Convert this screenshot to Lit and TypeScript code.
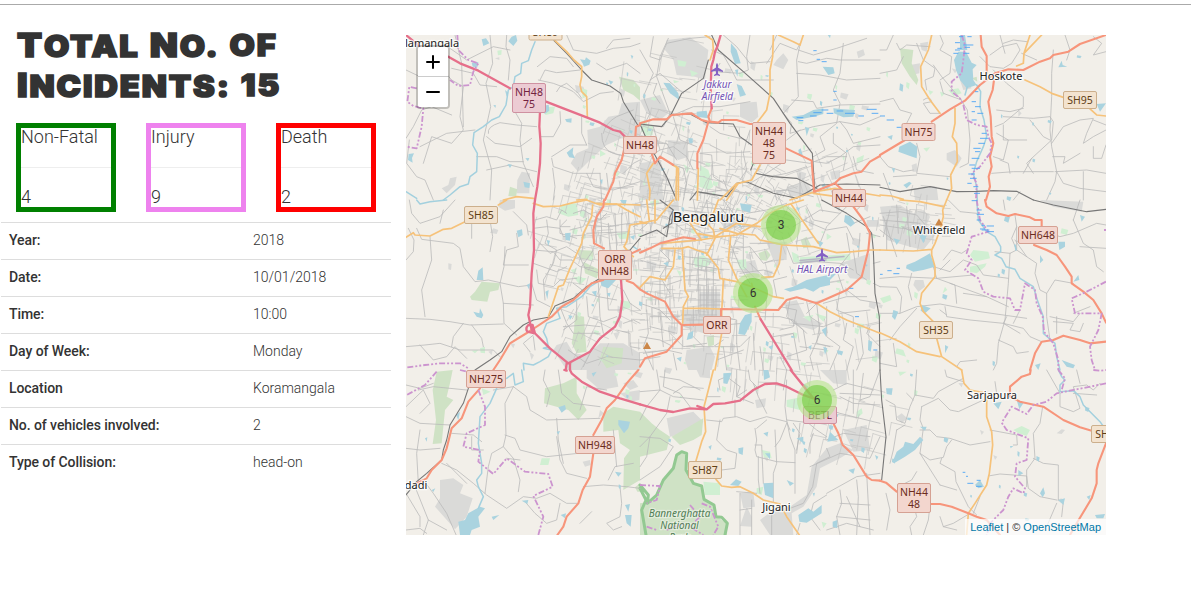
import { LitElement, html, svg, css } from "lit";
import { customElement } from "lit/decorators.js";

/* Map geometry is stored per sector; each sector is 240x170 px, drawn at three units per pixel. */
type Kind =
  | "built" | "wood" | "park" | "water" | "river" | "minor" | "rail"
  | "second" | "trunk" | "motor" | "bound" | "marsh";
type Sector = { x: number; y: number } & Partial<Record<Kind, string>>;

const sectors: Sector[] = [
  {
    x: 400, y: 30,
    built: "M665 220L720 215V330L665 325L620 345L570 390L535 425L512 400L530 370L565 355L562 300L600 290L625 260L655 255ZM150 445L170 440L165 465L140 490L125 475L145 465ZM365 425L390 430L388 490L350 490L352 450ZM285 85L298 82V90ZM525 165L550 170L555 182L530 190Z",
    wood: "M657 140L700 150L720 172V212L700 195L670 180ZM330 470L352 478L348 500L325 498Z",
    park: "M432 232L465 230L460 250L436 255ZM292 62L305 60L304 74L294 76ZM600 360L618 372L600 380ZM545 175L562 180L560 200L548 205ZM640 420L660 430L650 440Z",
    water: "M245 28L258 25L268 40L250 48ZM335 20L348 15L352 32L340 48L325 34ZM540 88L555 90L558 82L572 92L568 104L552 110L548 100ZM500 368L520 352L518 370L525 385L508 382ZM428 228L446 224L448 242L434 252ZM215 98L235 96L232 112L218 110ZM26 372L42 370L36 384L38 398L24 390ZM370 455L390 460L388 474L374 472ZM625 150L640 155L632 164ZM495 268L515 265L514 278L500 276ZM322 402L336 404L330 414ZM600 450L608 448L606 465ZM315 180L325 188L320 200ZM280 225L288 226L286 234ZM376 385L388 384L384 394ZM692 75L700 78L696 88Z",
    river: "M405 35L395 60L385 92L365 100L362 130L345 140L340 170L325 180L318 225L298 260L275 270L250 290L222 308L218 345L232 370L230 425L210 440L205 462L180 470L150 495L130 510M18 485L50 505",
    minor: "M18 120L60 140L120 110L155 150L190 170L180 260L190 300L155 340L95 320L70 400M165 15L185 100L190 290M270 15L278 100L258 160L272 230L250 330L275 420L270 510M18 325L40 290L65 240L95 230L155 255M28 330L20 400L50 440L75 450L100 510M320 15L318 50L330 90L325 150M345 245L365 280L360 330L370 400L400 470M265 310Q260 290 300 278L350 285L410 290M260 320L285 340L360 350L395 325M455 380L510 345L560 345M455 385L460 410L520 430L600 430M458 415L465 470L460 510M500 15L520 60L590 70L640 55L690 50L720 40M412 110L450 80L500 85L520 110M415 150L460 160L500 175L520 185L550 215L600 190L640 185M470 185L480 170L500 160L535 190L545 205M420 150L435 120L470 128L540 120M480 245L482 280L460 320L420 320M545 260L545 310L560 345M590 100L620 120L680 100L720 130M620 55L640 30L690 25M560 430L580 470L640 480L720 455M600 430L605 510M620 430L625 475L700 470M260 420L330 405L410 425M150 55L200 90L280 50L330 60M155 115L220 130L240 165L290 170M225 300L140 310L60 350M230 380L290 380L330 395L370 395M610 310Q615 280 650 260L700 240M605 310Q605 360 640 370L672 378M670 430L700 400L720 390",
    rail: "M462 32L500 70L545 120L575 150L630 168L662 190L670 215L715 288",
    second: "M465 32L500 65L522 90L545 110L545 140L540 165L545 185L560 200L562 260M310 510L350 500L400 505M530 510L560 508",
    trunk: "M720 285L708 290L706 320M672 360L665 390L645 430L640 455L615 510",
    motor: "M18 15L60 50M145 80L180 100L235 122L330 175M438 215L490 235L560 262L600 278L640 300L660 305L680 325M420 245L418 290L422 340L420 400L412 470L405 510",
    bound: "M172 15L175 60L205 90L235 100L220 125L210 165L175 168L150 150M50 175L28 170L22 215L40 228L70 235L65 290L50 355L18 350",
  },
  {
    x: 640, y: 30,
    built: "M80 30L150 22L205 60L195 150L165 140L110 135L100 90L75 60ZM85 330L140 335L145 380L115 390L80 370ZM300 220L350 215L355 260L335 278L300 260ZM410 90L430 70L445 90L430 118L400 105ZM650 65L670 58L675 75L655 85ZM0 210L60 195L85 250L60 270L20 250ZM0 400L60 390L70 510H0ZM570 425L600 420L600 445L575 450ZM440 470L500 455L520 490L450 500Z",
    park: "M180 405L205 420L220 470L205 480L178 470ZM0 275L20 270L22 295L5 305ZM15 290L40 285L38 315L15 318ZM112 90L140 95L135 110L115 108ZM150 120L175 130L155 140ZM100 150L118 155L102 160ZM130 402L150 415L140 430ZM650 385L672 375L668 395L650 400Z",
    water: "M273 40L290 60L302 100L285 102L272 65ZM70 158L90 160L115 190L118 210L90 190ZM290 162L305 168L318 195L300 200ZM170 245L200 242L204 265L170 260ZM548 110L580 112L584 130L565 135ZM455 260L490 255L520 240L550 235L550 252L520 260L470 270ZM580 235L610 238L645 240L640 260L610 262L582 250ZM495 290L508 295L500 318ZM560 10L572 15L570 25ZM475 360L482 355L488 375L478 378ZM285 120L295 118L292 140ZM145 325L158 325L158 340L148 340ZM545 465L555 460L553 485Z",
    minor: "M0 60L40 130L10 200L30 250L20 270M85 25L60 80L50 140L90 250M40 20L30 80L60 90L80 40L150 25L210 20M30 150L60 130L130 190M50 160L40 190L60 220M40 290L60 360L30 380M90 250L70 290L10 285M100 255L160 230L240 230L330 215M250 15L290 50L330 100L390 95M330 15L320 80L325 120L300 130L225 125L240 100M215 60L250 75L270 110L290 150L400 150M380 100L420 40L470 60L480 40M480 45L470 90L475 200L430 250M475 60L520 75L590 55L680 25M470 130L540 135L620 150L720 145M475 95L500 100L560 85L600 90L720 90M455 210L520 215L530 235L600 225L720 222M410 15L390 60M610 40L600 130L580 180L600 220L590 280L540 320L555 360L520 380M430 250L455 280L450 310L520 290L600 275L620 300L640 340L720 320M600 275L660 285L720 260M440 330L480 300M580 310L580 340L620 370L610 420M100 260L120 330L170 350M60 360L100 350L140 380L160 420M0 350L40 340L80 340L110 390M180 370L215 375L220 440L250 460M210 290L240 310L320 330L330 300M210 345L260 370L330 365M320 330L310 370L320 420L300 450M350 430L390 440L440 430L500 410M330 460L380 430L440 390L510 400L560 380L620 380M380 450L400 470L410 510M60 395L80 450L70 510M90 400L130 415L140 460L130 510M60 450L130 450M60 480L165 490M180 490L250 480L330 490M250 450L270 500M525 395L560 400L600 380L640 350L720 345M640 380L650 420L700 430M480 430L480 510M320 490L440 480L520 500",
    rail: "M215 15L235 60L310 125L400 205L450 280L517 370L525 490M205 90L190 145L125 190L90 260L65 290L0 282M90 255L150 252L200 278L280 282L300 320L335 345M340 400L332 420M0 282L25 340L50 385L80 440L110 510M150 510L170 485L260 500L290 460L320 455L400 490L470 505L540 465L620 462L720 465M345 430L400 440L470 445L530 475",
    second: "M195 15L218 30L220 60L210 90M400 15L398 80L390 120L390 190L380 240L350 280M415 15L460 35L480 45L490 15M175 415L172 510M360 405L335 450L295 460L260 510M40 400L20 430L30 480L28 510M98 405L115 415V510M110 410L108 510M240 510L290 460M450 510L525 485L585 475L720 498M520 490L590 500",
    trunk: "M215 235L205 260L210 275L235 278L245 270L290 270L330 282L345 282M0 280L40 268L80 268L95 255L155 250L185 270L205 275L190 330L172 370L172 415M438 355L515 392L522 485L585 460L600 445L640 430L665 425L690 395L720 378M35 370L45 400L60 380L100 405M585 460L605 478",
    motor: "M242 15L232 50L225 65L220 90L214 110L212 180L215 235",
    marsh: "M520 62H530M545 95H560M530 88H540M580 184H590M580 210H590M470 263H490M510 258H530M520 248H545M545 240H565M560 250H580M590 243H610M615 250H645M655 258H672M680 238H710M695 250H715M475 272H490",
  },
  {
    x: 880, y: 30,
    built: "M90 105L120 100L118 130L95 135ZM200 370L225 360L245 385L230 410L200 390ZM215 115L232 120L225 130ZM100 475L170 470L175 510H105ZM240 150L260 150L275 175L250 180ZM120 40L145 35L140 65L125 60ZM95 405L110 400L112 425L98 425ZM415 240L425 250L415 260Z",
    wood: "M60 55L100 60L95 100L115 150L110 165L90 140L65 100ZM275 145L290 140L292 155Z",
    park: "M180 185L195 190L185 200ZM145 180L160 185L150 195ZM205 180L235 175L245 190L220 198ZM130 355L150 352L140 365Z",
    water: "M235 65L258 65L275 98L290 105L278 118L280 150L290 165L260 175L240 150L228 120L222 90ZM240 15L255 15L262 60L240 60ZM545 92L548 105L562 110L535 112ZM58 350L90 335L112 350L110 385L90 378L55 365ZM650 222L678 220L660 245ZM60 160L70 165L68 185L58 180ZM22 320L38 315L35 330ZM70 465L88 455L95 460L80 475ZM35 415L45 415L42 430ZM325 375L330 370L330 385Z",
    river: "M262 170L255 195M290 165L302 185L300 230L312 270L320 320L310 350L290 395L280 430L290 470L292 510",
    minor: "M40 15L20 60L0 60M50 40L60 60L80 45L150 50M110 40L130 90L165 115L160 140L135 150L140 180M180 15L190 40L180 60L215 80L210 130L180 150M160 105L185 140L240 205L262 240L270 330L265 400L240 412M180 155L190 190L245 210M300 80L330 110L370 115L395 100L420 60L410 40L365 50L330 75M425 70L470 90M370 40L400 30L440 35M520 60L515 130L515 200L510 300L515 350L530 425L525 455L500 510M640 20L665 40L640 75L678 65M340 120L380 160L430 200L430 230L370 280L345 290M430 235L390 245L350 240M370 260L460 265L510 260L520 275L515 330L455 385L430 430M370 285L370 330L440 330M350 310L385 330L370 390L340 380M450 270L490 320L510 330M515 340L550 290L600 270L640 265L620 310L610 340L640 320L678 300M518 380L555 380L550 400L600 370M520 425L400 425L335 430M525 425L620 420L678 430M530 425L550 460L600 475L678 485M610 425L610 510M360 15L375 70M555 15L570 60L560 90M640 270L678 285M640 350L640 385L665 385L678 345M0 215L40 205L60 240L95 250L75 290L90 330M110 340L120 380L110 430L210 440M0 130L50 120L70 80M0 380L25 410L70 425L100 420M10 430L40 510M40 440L110 435M390 430L385 400L360 390M455 385L440 400L460 430M130 210Q150 195 155 215L130 220L150 250L180 250M420 485L400 510",
    rail: "M0 472L60 485L150 470L230 485L290 484L340 482L410 484L460 510",
    second: "M155 15L145 60L122 110L125 170L150 210L180 250M410 108L430 100L432 70L450 15M432 70L485 15M435 150L480 170L515 190L550 202M625 232L650 255L678 258M225 235L225 280L217 320L230 340L232 395L212 435L215 475L200 510M0 495L35 498L70 508",
    trunk: "M155 275L210 238L255 212L300 165L345 130L385 118L430 120L480 95L510 85L520 75L565 65L600 42L678 15M302 15L305 50L320 78L320 130M0 375L75 330M342 150L338 180L325 215L332 260L335 320L340 340L330 380L335 410L326 440L330 470L318 510",
    bound: "M245 15L255 45L250 90L245 130L215 155L215 185L240 205L250 225L260 270L290 285L320 290L325 320L335 340L330 370L300 410L275 430L290 460L288 510",
    marsh: "M237 20H250M262 20H275M225 38H240M250 45H280M232 55H245M255 52H270M220 70H235M250 70H268M225 60H240M285 185H295M275 215H288M285 230H302M275 245H285M292 250H310M275 270H290M0 258H15M20 270H42M50 292H65M305 310H320M300 325H325M295 340H315M280 355H302M285 365H300M275 385H298M268 405H285M275 415H300M265 432H285M270 445H290M262 460H275M280 470H295M282 490H300",
  },
  {
    x: 400, y: 200,
    built: "M300 0L345 0L345 25L315 32L295 20ZM280 85L295 90L290 102L270 98ZM145 190L155 192L153 210L145 208ZM470 435L500 425L520 460L560 465L600 430L670 430L720 460V510H500L480 480L460 450ZM330 430L345 432L340 445ZM388 455L402 465L395 480ZM620 440L660 440L660 480L620 480ZM640 400L660 395L650 420ZM265 455L278 450L275 465Z",
    wood: "M225 275L245 245L300 250L295 270L270 275L262 305L215 300L210 290ZM535 150L580 152L580 180L540 178ZM525 345L552 350L555 400L560 455L530 460L515 430L522 390ZM550 185L600 210L590 235L555 220ZM610 440L670 445L665 490L620 505L600 475Z",
    park: "M485 15L530 10L535 45L505 50L475 40ZM512 210L530 205L525 225ZM520 230L560 235L540 255ZM650 100L680 95L690 115L660 118ZM240 445L255 440L255 460L242 458ZM215 452L235 450L225 460ZM660 300L690 305L690 325L665 330ZM550 60L562 50L560 65Z",
    water: "M235 212L248 202L250 240L230 240ZM220 335L238 340L240 325L250 345L245 355L230 350ZM350 92L366 88L368 105L355 112ZM495 100L512 98L510 122L497 120ZM440 120L450 122L445 138ZM436 275L446 270L442 298ZM600 240L650 238L625 265L605 258ZM660 0L680 0L675 20ZM575 275L590 272L588 290ZM620 280L632 278L628 292ZM690 110L705 105L702 120ZM505 345L518 348L510 360ZM380 255L390 250L388 270Z",
    river: "M50 0L60 12L90 5L140 0M595 245L570 260L545 290L500 320L470 325L480 355L440 370L430 395L440 415L445 440L430 445L455 450L445 470L420 485L400 495L370 490L372 510M700 140L715 150",
    minor: "M28 0L35 40L60 70L120 50L165 0M50 85L65 118L120 125L160 130L180 145L190 200L225 245L265 240L355 260L395 255M90 110L95 180L65 270L75 350M120 70L130 30M215 60L215 115M270 60L278 110L270 155M18 180L40 155L42 120L25 85M340 35L380 75L385 105M405 60L440 50L470 60L485 30L500 40M350 100L355 140L320 150L310 195L385 195M315 140L312 200L300 250L310 310L400 315M310 310L312 370L350 405M18 355L90 358L150 365L210 375L310 372M190 370L160 410L155 440M215 375L245 415L250 440M18 440L75 435L120 430L180 450L280 450L300 470M60 435L100 480L140 470L165 440L200 475M400 85L440 80L480 85L490 110L555 105M405 115L450 160L500 140L530 160M400 150L460 155L480 180L515 180M400 190L470 215L500 200M410 210L415 250L460 260L480 240L530 235M395 250L410 300L450 320M440 60L445 100L435 130L470 150L460 190L430 240L435 300M500 60L480 80L510 80M510 90L550 80L560 55M520 40L550 30L600 60L620 40M530 150L555 205L600 220M515 180L540 200L580 205M540 250L545 200L580 150M520 250L560 280L595 290L650 300M560 290L565 350L610 365L650 350M595 250L600 350L610 400M480 320L500 370L520 400L600 400M490 380L555 375L600 380M530 300L530 360L490 390M400 405L370 430L390 455M400 410L405 450M330 430L360 410M620 250L625 330L660 330M670 270L690 310L720 330M670 370L700 360L720 370M650 390L690 400L690 440L720 445M555 75L620 80L690 70M560 100L690 95M585 60L590 130M600 20L605 90L600 130M625 70L630 150M645 40L650 150M665 40L665 130M685 30L690 130M700 80L720 70M480 60L480 100L530 115M505 450L560 490L620 470L720 480M550 500L580 440L620 400",
    rail: "M225 510L270 480L305 455L330 410L370 375L400 360L445 352L465 318L520 295L560 260L600 235M690 150L720 115",
    second: "M18 112L40 98L45 105L90 108L130 88L155 85L195 65M295 15L320 0M400 10L430 20L480 18L520 8L560 0L600 15L650 12L680 30L720 50M578 15L575 50L550 100L545 130L522 180L510 205L490 255L475 260L445 350M680 125L672 140L685 155L700 170M720 70L690 75L680 125M590 10L720 15",
    trunk: "M612 0L610 20L590 50L580 90L582 130L612 145M610 240L575 250L520 300L485 320L455 350L395 390L330 430L300 480L280 510M680 242L700 250L720 268M695 160L720 148",
    motor: "M405 0L400 40L402 150L395 220L390 320L385 345L395 390L450 445L505 490L570 455L600 415L645 380L660 350L667 300L663 238M385 375Q375 385 382 395L405 400L398 375ZM500 490L497 510M510 490V510",
    bound: "M22 502L75 495L120 490L180 490L205 505",
  },
  {
    x: 640, y: 200,
    built: "M180 275L240 275L240 345L180 345ZM120 330L240 330L240 385L190 400L130 380ZM140 450L210 440L225 470L215 510H145L135 480ZM80 20L115 0L120 60L95 75ZM230 50L260 45L300 75L260 95ZM315 185L345 180L360 230L330 240L310 210ZM430 310L470 300L495 350L455 365ZM600 190L690 160L690 240L630 235ZM380 130L440 125L440 180L400 180ZM680 60L715 60L720 80H680ZM20 180L50 190L45 210L20 205ZM450 370L480 350L550 370L520 390Z",
    wood: "M200 410L222 405L222 435L205 440ZM355 160L380 150L392 165L380 182L362 180ZM482 120L500 110L515 140L490 145Z",
    park: "M160 175L190 165L215 185L200 200L165 202ZM480 172L630 162L632 180L480 188ZM455 155L475 165L480 190L460 185ZM30 5L55 0L58 12L35 20ZM110 210L125 215L120 230ZM525 340L560 350L550 365ZM490 350L520 345L510 365ZM20 295L40 290L35 305ZM650 370L672 372L670 385L652 385ZM560 100L575 110L560 120ZM290 180L318 178L320 205L300 208Z",
    water: "M432 268L460 260L500 240L540 230L590 220L570 240L570 255L540 262L520 275L495 265L450 275ZM315 345L335 340L335 365L315 405L295 402L300 370ZM615 45L630 48L645 70L632 80L612 65ZM300 10L335 15L330 38L305 30ZM145 400L160 392L158 415L140 420ZM545 390L560 380L558 410ZM685 420L697 425L692 455L684 450ZM550 440L562 445L555 465ZM110 475L125 470L122 485ZM12 275L25 272L22 285ZM468 20L480 25L475 35ZM590 450L600 455L595 465ZM505 440L515 435L512 450ZM385 440L400 435L395 450ZM530 120L550 128L540 142ZM70 190L85 185L85 200Z",
    minor: "M0 15L60 10L100 0M20 40L80 50L130 90M30 100L35 60L0 90M60 150L90 180L60 230L90 280M0 180L50 195L95 200M0 210L60 215M15 250L80 255L125 240M60 240L60 290M90 230L90 330M0 310L60 330L90 360M20 330L25 400L10 440L40 510M30 350L120 350M30 380L110 400M60 340L70 440M0 410L60 420L100 440M90 400L130 440L200 430M130 170L240 180M140 190L250 210M150 150V260M175 160V340M200 200V330M220 210V330M130 210H230M135 240H240M140 270H240M140 300H240M160 320V380M180 260V345M192 260V345M204 260V345M216 260V345M228 260V345M180 285H240M180 315H240M135 345H230M140 360H190M150 400L190 440M140 440H220L250 420M225 440L300 440L330 410M230 480L310 450M245 350L290 360L290 430M250 375L310 370M340 400L345 510M345 350L420 350L460 360L500 400M375 360L380 300M330 130L410 130M270 130L300 200L330 250M290 145L330 140L370 190L400 180M310 100L310 200L350 240L400 230M300 220L370 210L400 220M330 190L370 230M250 0L280 40L350 60M240 20L280 70L240 90M160 0L170 60L220 70M180 20L270 30M200 0L210 80M130 30L200 40M120 60L190 100L260 90M270 40L300 80L360 80M320 40L380 30L440 10M390 40L450 60M440 20L480 60L470 130M460 80L540 30L600 40M490 60L560 90L620 80L640 120M540 130L560 80L620 20M500 20L520 60L570 70M440 140L460 190L530 185L600 190L640 210M620 100L630 160L590 210L610 270M640 150L650 220L680 240M660 100L655 170M690 50L640 70M410 290L400 240L440 230M420 320L470 330L460 380L420 390M450 300L440 350L490 390L500 450L440 470M500 305L510 350L540 370L530 430L570 440M530 310L500 340M460 370L550 380L600 360M560 320L560 410L600 440L570 510M600 270L590 330L640 350L640 380M620 270L660 300L720 310M600 340L690 330M550 310L620 290L680 290M530 310L540 400L510 470L520 510M400 410L460 400L480 510M420 470L440 510M620 370L610 420L640 440L620 510M660 380L670 460L650 510M690 380L680 400L720 440M480 440L560 450M360 440L370 510M400 400L390 510M250 440L260 510M290 430L300 510M10 460L80 450L125 460M100 460L110 510M0 480L60 470M700 190L720 185M700 250L720 260M680 100L720 110M680 0L650 30",
    rail: "M60 0L100 30L95 70L70 85M0 110L50 90L80 110L90 50L100 30M545 0L620 40L680 80L695 100L700 150L705 280L718 350L720 510",
    second: "M0 70L50 60L100 0M45 68V0M0 65L20 70M20 0L28 60M65 145L125 145L145 140L170 150L200 160L235 205L240 235L290 245L335 260L400 290L430 295M65 130L180 120L240 110L290 105L350 70L390 40L440 15L490 0M170 100L225 110L290 70L360 80M145 60L170 100L185 120M190 60L220 90L225 115L200 165M235 0L220 40L150 65L185 75M240 85L290 100L345 105L360 120L410 130L430 135L520 140L590 158L640 155L690 150L720 150M272 110L265 180L290 235L320 290M425 135L418 190L400 230L365 232M455 15L535 130M105 150L100 200L75 240L30 230L0 262M127 150L135 270L145 290L130 320L128 370M250 240L245 340L245 400L225 510M130 325L190 325L240 327M530 310L570 335L620 360L720 400M335 250L345 290",
    trunk: "M0 158L30 145L60 130L130 112L165 117M0 268L20 280L75 305L100 350L125 375L190 374M125 375L125 405L80 455L15 475L0 500M243 348V327L415 330L440 300L470 292L530 310L620 270L665 230L685 150L690 100L670 60L640 20M345 320L362 358",
    motor: "M362 358L400 420L455 510",
    marsh: "M645 350H657M700 450H712M628 265H640",
  },
  {
    x: 880, y: 200,
    built: "M0 20L60 15L100 40L130 30L150 50L140 75L170 100L130 150L90 140L20 120ZM480 0L610 5L605 35L520 20ZM105 240L130 240L135 260L115 275L100 255ZM10 60L40 60V90L10 95Z",
    park: "M280 150L325 155L330 175L285 185L270 165ZM270 200L320 190L315 200L290 220L270 215ZM50 445L70 450L78 470L45 460ZM195 260L202 270L188 280ZM0 295L30 285L35 300L10 310ZM545 85L565 90L560 105L542 100Z",
    water: "M80 195L105 185L150 160L165 200L130 210L100 215L78 205ZM375 50L390 50L385 68L372 62ZM535 125L555 125L555 140L538 150ZM480 165L490 180L480 190ZM595 225L598 240L580 245ZM125 315L152 325L135 340L122 332ZM40 330L55 335L45 360L36 350ZM195 435L205 440L195 460ZM545 480L585 495L580 505L560 500ZM465 495L482 490L475 510ZM600 45L615 50L605 65ZM40 115L60 120L50 135ZM115 100L140 108L130 130Z",
    river: "M290 0L295 60L320 95L345 110L362 140L362 155L345 165L365 175L378 200L405 208L420 235L460 260L472 300L490 350L490 400L525 430L530 470L540 510M405 135L408 150",
    minor: "M0 40L60 35L110 45L140 80M0 90L40 120M20 60L20 150M50 15L55 100M80 20L90 140M0 60L120 70M0 75L100 90M30 30L10 110M65 80L130 110M190 180L215 150L245 160L260 150M205 0L240 35L290 40M375 30L370 0M405 45L410 80L395 115L410 150L390 160L385 250L375 360L355 430L350 490L340 510M410 80L410 150L440 170L470 190L465 220L480 270L500 280L500 350L510 420M345 155L390 160M405 120L440 170M0 235L60 230L170 235L280 225M170 235L225 255L230 310M170 235L160 200L210 215L250 180L290 195L310 225L385 235M180 210L210 180M95 220L85 260L95 300M0 260L50 262L65 290L60 340L0 340M60 340L110 320L180 312L300 335L440 355M195 320L200 350L270 360L370 370L420 400M250 280L320 290L385 320M110 325L60 380L30 420M210 250L320 290M380 350L370 370L430 385L450 410L485 425M355 420L400 440L410 460L445 455M0 490L50 500L40 430M230 500L240 485L290 480M580 60L610 130L640 150L650 200L670 215M480 90L540 110L580 100L650 70L678 75M600 0L580 60M500 280L525 240L580 250M510 350L580 365L600 340M520 365L580 370L570 390L600 395L610 370M530 350L530 400M580 340L630 320M410 125L430 115M420 330L400 370M600 140L678 145M10 50L50 170M180 330L200 345",
    rail: "M460 0L520 15L620 35L678 28",
    second: "M60 0L120 5L190 20M200 0L188 30L190 50L180 90L165 130L155 150L155 165L165 200L165 230L125 280L120 310L130 335L160 365M0 150L100 153L155 148M170 415L185 470L245 510M0 398L60 425L110 455L180 470",
    trunk: "M315 0L320 20L350 40L385 48L405 42L450 52L465 60L485 60V80M462 135L500 150L530 165L555 200L575 230L575 250L610 275L640 300L665 340L678 368M450 510L465 460L485 425L520 420L550 407L600 420L630 430L678 425",
    bound: "M290 0L300 60L325 95L275 110L260 160L275 180L255 210L295 235L310 275L340 290L390 295L405 330L420 330L435 250L465 270L470 310L488 350L492 395L520 430L535 480L535 510M678 245L620 275L575 295L585 340L665 340L655 390L630 440L635 480L645 510M672 90H678",
    marsh: "M275 2H292M290 30H305M290 43H312M290 60H302M320 78H342M305 90H328M305 76H315M300 87H315M320 95H342M50 205H60M22 212H35M40 221H58M0 223H8",
  },
  {
    x: 400, y: 370,
    built: "M120 330L160 325L190 345L180 370L218 385L200 440L165 478L105 410L120 385ZM560 0L645 0L655 50L630 55L600 60L560 25ZM600 120L612 130L595 145ZM548 275L570 270L572 285L555 290ZM670 40L700 30L715 50L690 60ZM660 70L720 60L718 90L690 95Z",
    wood: "M110 5L158 0L150 40L140 80L160 90L135 120L125 220L98 222L108 150L98 60ZM435 55L490 40L530 20L530 70L560 120L535 150L505 120L470 110L432 100ZM610 130L640 110L720 125V330L670 360L672 265L690 240L660 220L655 180L610 185ZM720 340L705 352L712 365H720Z",
    park: "M425 265L450 265L445 285L420 285ZM245 55L272 65L250 75Z",
    water: "M175 455L195 450L205 430L240 410L255 415L235 440L240 470L215 480L210 495H180ZM655 150L690 155L685 175L672 190L655 165ZM475 112L495 105L498 118L485 128ZM365 392L385 390L382 402ZM645 305L665 308L655 320ZM675 405L690 402L685 425ZM675 435L695 435L692 470L680 460ZM275 440L298 435L280 450ZM482 435L498 430L495 445ZM95 360L106 355L100 366ZM168 135L180 125L175 150ZM75 205L82 202L80 215ZM470 185L480 183L475 194ZM575 10L590 5L580 20Z",
    river: "M320 25L340 10L345 45L370 35L365 0M290 55L270 100L240 140L235 220L245 280L245 310L230 330L235 350L250 380L235 415",
    minor: "M18 140L60 160L150 165M18 45L60 55L100 40M18 110L70 60L90 100L60 130M18 235L60 240L120 235M60 180L50 250L55 340M70 330L100 370L140 430L175 510M18 370L60 440L60 470M45 350L85 450L70 495M85 450L140 480M18 480L60 475L80 490M125 280L170 300L220 340L260 375L320 415L370 380L410 385L450 370L500 400L530 400M140 280L200 340M155 190L220 195L245 215M340 50L315 100L318 195L310 230L275 250L265 290L255 370M340 50L380 80L390 120L440 150L600 145M315 195L345 205L360 240L440 260L535 250M310 230L340 265L360 330L355 365M320 265L360 270M470 145L475 210L490 280M470 200L480 270L500 310L560 325M375 395L405 430L440 460L470 450L480 400M550 350L610 345L680 350L720 355M540 460L575 425M660 350L665 400L660 440L620 460L640 480L665 470M435 0L430 30L450 70L440 110M475 0L485 70L520 100L600 110M540 120L560 50L620 60M215 200L215 240L250 240M640 180L650 290M625 330L645 290L700 280M280 60L340 50M55 60L100 50L200 60",
    rail: "M205 55L190 100L150 165L140 210L130 240L125 270L80 310L50 335L18 375",
    trunk: "M240 55L205 95L185 145L155 175L140 235L125 270L95 300L80 325L50 340M715 0L680 40L645 90L620 115L605 150L580 195M580 250L570 320L548 360L535 400L500 440L490 470L472 495",
    motor: "M510 0L515 10L545 35L600 65L660 85L720 103M493 0L500 2",
    bound: "M110 5L75 45L20 75M235 60L255 110L255 165L200 190L190 230L240 240L235 275L280 312L320 265L375 305L445 312L458 350L400 378L430 440L415 495M180 0L200 5",
  },
  {
    x: 640, y: 370,
    built: "M360 450L400 420L450 410L500 375L515 290L560 235L600 220L640 240L600 265L540 295L530 350L490 410L455 430L460 495H390ZM80 145L160 125L190 155L170 180L90 200ZM300 370L340 365L345 410L310 415ZM610 180L680 165L690 240L640 245ZM345 90L378 85L375 110L350 115ZM170 0L210 0V25L180 22ZM320 410L335 440L335 470L300 468ZM540 0L620 0L620 45L580 40ZM370 260L385 262L382 275Z",
    wood: "M0 125L35 160L60 180L90 200L80 240L0 260ZM95 200L190 145L185 195L160 210L120 225ZM0 400L30 395L50 375L70 330L100 295L110 255L140 245L140 300L160 340L185 350L190 390L225 410L230 440L260 460V495H0Z",
    park: "M190 335L240 340L240 375L195 375ZM365 240L390 245L395 265L372 262ZM650 125L665 115L668 130L652 145ZM440 90L490 80L480 120L440 110ZM350 355L370 350L365 375L350 370ZM545 455L560 460L550 475Z",
    water: "M475 435L505 415L520 425L545 405L545 430L500 458L478 455ZM370 340L400 338L400 385L375 375ZM250 10L275 8L262 42L250 40ZM370 0L385 0L390 22L372 30ZM570 185L595 210L562 215ZM270 345L288 328L305 335L295 348ZM295 235L310 232L308 255L296 250ZM440 330L462 340L450 348ZM578 455L592 450L592 475L578 470ZM470 205L490 200L490 220ZM625 300L645 295L640 312ZM370 190L385 185L382 200ZM518 370L525 368L522 380ZM490 40L505 50L495 65ZM375 250L390 250L390 268ZM205 230L215 225L212 240ZM705 255L715 260L710 270Z",
    minor: "M50 0L60 60L20 110L0 150M75 0L70 50L120 70L150 110M0 65L60 60L100 80L190 90M90 80L80 130L30 200L0 230M60 20L120 30L180 60M0 200L60 205L100 230L60 290L0 330M30 200L20 260L0 290M100 70L130 50L190 55M200 150L245 155L250 145L290 140L330 155L380 140L440 155L450 180M285 90L285 140M240 150L230 210L260 240L290 250L285 295L245 300M240 60L235 30L260 20L300 50M300 50L290 80L320 60M340 40L355 80L380 130M325 0L330 30L350 50M345 175L350 210L345 240L350 260L410 275L465 278M350 175L380 150M345 225L365 225L370 340M355 260L355 330L360 370M405 180L410 280L400 310L400 395M440 160L420 210L405 230M440 150L450 200L465 240L465 370M460 160L480 190L470 240M440 30L435 110L440 150L480 155L520 160M480 160L470 250M540 110L600 130L720 160M500 130L500 155L530 180L560 200M520 190L510 220L510 250M510 290L600 250L690 265L720 200M560 210L610 190L690 200M600 80L640 100L720 105M600 70L720 75M580 60L620 40L700 60M640 0L640 130M670 10L660 90M720 0L690 80L660 90M290 0L290 80L340 100M440 0L430 60M200 80L240 80M290 365L350 370M300 370V495M335 390V495M395 430V495M300 420L335 415M560 370L650 320L720 310M560 375L520 400L510 440L540 480M600 360L605 400L590 440L600 495M650 330L655 380L650 495M680 310L690 495M600 400L690 405M590 440L690 450M620 380L660 470M560 480L620 460L700 480M480 460L470 495M560 235L570 260L530 280L518 350L490 400L450 415",
    second: "M220 0L205 60L192 110L197 185L185 215L168 272M228 328L245 348L275 352L300 350L340 370L370 390L420 402L440 440L478 495",
    trunk: "M580 160L595 190L608 225L640 255L680 320L695 330L720 332",
    motor: "M0 103L60 120L100 126L150 115L200 118L220 102L255 100L300 92L340 60L375 42L410 40L440 50L490 75L520 85M452 0L520 85M172 108L200 118",
    bound: "M0 345L60 348L50 390L20 400M20 470L50 480M150 405L180 440L150 470L190 495M185 400L210 410L235 470L220 495M80 480L130 460",
  },
  {
    x: 880, y: 370,
    built: "M50 140L65 130L82 145L65 160ZM530 190L545 178L555 180L545 192ZM235 40L250 38L245 52ZM340 255L352 260L345 270ZM530 390L545 385V400ZM300 180L312 185L305 195Z",
    park: "M400 180L425 168L450 180L440 198L415 190ZM55 5L80 5L60 18Z",
    water: "M40 270L50 245L70 230L75 215L100 222L120 200L130 210L105 240L75 260L42 280ZM18 55L38 55L35 75L20 72ZM340 100L365 95L355 118ZM410 90L430 100L418 118ZM415 300L430 310L415 318ZM285 345L300 330L312 350L295 355ZM480 370L490 352L495 370L488 382ZM645 435L675 432L670 445L650 445ZM620 380L632 375L628 390ZM120 170L140 170L135 182ZM535 390L555 385L550 405ZM390 228L400 228L392 235Z",
    river: "M535 0L545 20L555 30L540 45L540 65L580 62L600 80L610 105L660 155L678 180",
    minor: "M18 90L45 105L50 150L75 160L90 110L105 75L160 85L175 65L230 35L250 25M110 0L105 75M195 0L200 20L250 35M345 35L350 70M125 110L175 85L210 120L235 125L310 90M125 110L120 150L130 175L120 250L180 345M50 180L75 165M50 180L40 240L30 280M120 180L150 180L170 200L210 205L270 225L330 215M120 250L150 270L190 262L200 230L215 210M185 265L180 280L225 305L228 335L265 410L290 435M180 345L230 360M60 375L75 340L95 330L110 305M325 318L360 312L440 318L445 355L480 380L530 390M460 265L490 280L535 285L535 390M330 180L410 195L412 225L400 225M488 110L480 160L460 190L465 265L440 300L440 350M540 70L540 110L580 125L600 115L580 50L620 45L640 60L660 40M500 0L540 70M580 70L650 75M550 395L545 440M530 400L500 470M600 40L590 0M270 430L220 460L190 470M150 405L145 450L130 495M180 440L190 470L230 480M100 400L110 440L90 470L95 495M18 370L30 420L20 480M280 430L300 380M80 70L100 90",
    rail: "M0 0L5 90L18 200L5 330",
    second: "M245 0L252 40L270 60L310 68L320 80L320 140L335 185L338 225L328 310L320 345L285 400L265 430L260 495",
    trunk: "M0 332L18 338L50 365M152 402L180 402L215 410L265 430L290 440L320 450L360 495M452 0L450 12L425 20L390 50L390 80L420 95L490 110L550 150L600 172L635 182M678 220L655 280L650 300L650 340L635 385L590 460L570 495",
    bound: "M678 40L640 48L530 70L500 95L460 105L440 132L395 110L365 158L380 180L445 205L440 270L410 280L405 320L435 355L430 370L400 355L385 380L370 420L330 460L320 495M535 0L555 25L545 60M640 0L660 2L678 0",
    marsh: "M248 307H256M258 319H264M262 340H280M290 331H302M288 349H305",
  },
];

/* Street blocks filling the denser quarters: centre, size, rotation, spacing, seed. */
const quarters: [number, number, number, number, number, number, number][] = [
  [690, 215, 120, 110, 12, 8, 3], [690, 275, 110, 110, 2, 8, 5], [620, 225, 80, 90, -8, 9, 9],
  [655, 150, 100, 80, 18, 10, 12], [660, 320, 80, 80, -4, 10, 17], [750, 200, 90, 80, 28, 9, 21],
  [780, 245, 60, 60, -14, 11, 25], [915, 215, 70, 60, 8, 9, 33],
  [760, 350, 110, 80, 6, 15, 37], [830, 330, 100, 90, -10, 15, 41], [565, 235, 70, 120, 14, 13, 47],
  [595, 320, 70, 80, 24, 14, 51], [820, 180, 90, 60, -20, 13, 57], [845, 415, 110, 60, 12, 14, 61],
  [670, 80, 90, 80, 10, 17, 67], [720, 145, 90, 60, 0, 13, 71], [605, 170, 80, 70, 16, 13, 75],
];

function seeded(seed: number) {
  let s = seed * 7919 + 13;
  return () => ((s = (s * 16807) % 2147483647) / 2147483647);
}

function streetPath([cx, cy, w, h, deg, step, seed]: (typeof quarters)[number]) {
  const rnd = seeded(seed);
  const c = Math.cos((deg * Math.PI) / 180);
  const s = Math.sin((deg * Math.PI) / 180);
  const pt = (x: number, y: number) =>
    `${(cx + x * c - y * s).toFixed(1)} ${(cy + x * s + y * c).toFixed(1)}`;
  let d = "";
  const inside = (x: number, y: number) => (x / w) ** 2 + (y / h) ** 2 < 0.27;
  for (let x = -w / 2; x < w / 2; x += step) {
    for (let y = -h / 2; y < h / 2; y += step) {
      if (!inside(x, y)) continue;
      const jx = x + (rnd() - 0.5) * step * 0.6;
      const jy = y + (rnd() - 0.5) * step * 0.6;
      if (rnd() < 0.55) d += `M${pt(jx, jy)}L${pt(jx + step * (0.8 + rnd()), jy + (rnd() - 0.5) * 3)}`;
      if (rnd() < 0.55) d += `M${pt(jx, jy)}L${pt(jx + (rnd() - 0.5) * 3, jy + step * (0.8 + rnd()))}`;
    }
  }
  return d;
}

function specks(seed: number, count: number, x0: number, y0: number, w: number, h: number, size: number) {
  const rnd = seeded(seed);
  let d = "";
  for (let i = 0; i < count; i++) {
    const x = x0 + rnd() * w;
    const y = y0 + rnd() * h;
    const a = size * (0.4 + rnd());
    const b = size * (0.4 + rnd());
    d += `M${x.toFixed(1)} ${y.toFixed(1)}l${a.toFixed(1)} ${(b * 0.3).toFixed(1)}l${(-a * 0.3).toFixed(1)} ${b.toFixed(1)}l${(-a * 0.8).toFixed(1)} ${(-b * 0.4).toFixed(1)}z`;
  }
  return d;
}

const streets = quarters.map(streetPath).join("");
const layers: Kind[] = ["rail", "second", "trunk", "motor", "bound", "marsh"];

/* Road shields: centre x, top, width, class, lines. */
const shields: [number, number, number, string, string[]][] = [
  [545.5, 23, 33, "sh", ["SH89"]],
  [529, 83.5, 33, "mw", ["NH48", "75"]],
  [640, 136.5, 33, "nh", ["NH48"]],
  [769, 122.5, 33, "nh", ["NH44", "48", "75"]],
  [918.5, 123.5, 33, "nh", ["NH75"]],
  [1080, 91.5, 33, "sh", ["SH95"]],
  [849, 189.5, 33, "nh", ["NH44"]],
  [481, 206.5, 33, "sh", ["SH85"]],
  [615, 250.5, 33, "nh", ["ORR", "NH48"]],
  [1038, 226.5, 39, "nh", ["NH648"]],
  [717, 316.5, 27, "nh", ["ORR"]],
  [936, 321.5, 33, "sh", ["SH35"]],
  [486, 370.5, 39, "nh", ["NH275"]],
  [820, 406.5, 33, "mw", ["BETL"]],
  [595, 436.5, 39, "nh", ["NH948"]],
  [705, 461.5, 33, "sh", ["SH87"]],
  [1108, 425.5, 33, "sh", ["SH35"]],
  [914, 483.5, 33, "nh", ["NH44", "48"]],
];

const places: [number, number, string, string][] = [
  [432, 46.5, "lamangala", "town"],
  [1001, 79.5, "Hoskote", "town"],
  [708.5, 221.5, "Bengaluru", "city"],
  [939, 234, "Whitefield", "town"],
  [992, 399, "Sarjapura", "town"],
  [416, 489, "dadi", "town"],
  [776.5, 510.5, "Jigani", "town"],
  [717.5, 88, "Jakkur", "air"],
  [717.5, 100, "Airfield", "air"],
  [822, 273, "HAL Airport", "air"],
  [679.5, 517, "Bannerghatta", "forest"],
  [679.5, 529, "National", "forest"],
  [679.5, 541, "Park", "forest"],
];

const clusters: [number, number, number][] = [
  [781, 225, 3],
  [753, 293, 6],
  [817, 400, 6],
];

@customElement("incident-map")
class IncidentMap extends LitElement {
  static styles = css`
    :host { display: block; position: relative; width: 700px; height: 500px; overflow: hidden; background: #f2efe9; }
    .canvas { display: block; width: 700px; height: 500px; }
    path { vector-effect: non-scaling-stroke; stroke-linejoin: round; stroke-linecap: round; }
    .built { fill: #dadad8; }
    .wood { fill: #cfe2c5; }
    .park { fill: #d0efd2; }
    .water { fill: #aad3df; }
    .river { fill: none; stroke: #a3d0de; stroke-width: 1.5; }
    .minor { fill: none; stroke: #bababa; stroke-width: 0.8; }
    .streets { fill: none; stroke: #c5c5c4; stroke-width: 0.7; }
    .rail { fill: none; stroke: #777; stroke-width: 1.1; }
    .second { fill: none; stroke: #f6c27a; stroke-width: 1.7; }
    .trunk { fill: none; stroke: #f7957b; stroke-width: 2.1; }
    .motor { fill: none; stroke: #e66f8a; stroke-width: 2.3; }
    .bound { fill: none; stroke: #cc94cf; stroke-width: 1.8; stroke-linecap: butt; stroke-dasharray: 6 2 2 2 2 2; }
    .marsh { fill: none; stroke: #4da5f5; stroke-width: 0.9; stroke-linecap: butt; }
    .edge { fill: none; stroke: #93c992; stroke-width: 3; }
    .peak { fill: #cc8748; }
    .plane { fill: #8461c4; }
    .runway { fill: none; stroke: #b8b5c4; stroke-width: 1.5; }
    text { font-family: "Noto Sans", sans-serif; text-anchor: middle; }
    .town, .city, .air, .forest { paint-order: stroke; stroke: rgba(255, 255, 255, 0.75); stroke-width: 2.5px; stroke-linejoin: round; }
    .town { font-size: 11px; fill: #222; }
    .city { font-size: 14.6px; fill: #222; }
    .air { font-size: 10px; font-style: italic; fill: #7252b5; }
    .forest { font-size: 10px; font-style: italic; fill: #517d55; stroke: rgba(255, 255, 255, 0.4); }
    .plate { stroke-width: 1; }
    .plate.nh { fill: #f3d6ce; stroke: #d5a193; }
    .plate.mw { fill: #eccbd3; stroke: #cf91a1; }
    .plate.sh { fill: #f3e3cf; stroke: #ccaf8c; }
    .ref { font-size: 10.5px; }
    .ref.nh { fill: #6b2b20; }
    .ref.mw { fill: #73223f; }
    .ref.sh { fill: #604016; }
    .halo { fill: rgba(181, 226, 140, 0.6); }
    .disc { fill: rgba(110, 204, 57, 0.6); }
    .count { font-size: 12px; fill: #333; font-family: "Roboto", sans-serif; }
    .zoom {
      position: absolute; left: 10px; top: 10px; display: flex; flex-direction: column;
      border: 2px solid rgba(0, 0, 0, 0.2); border-radius: 4px; background-clip: padding-box; overflow: hidden;
    }
    .zoom button {
      width: 30px; height: 30px; padding: 0; border: 0; background: #fff; color: #000;
      display: grid; place-items: center;
    }
    .zoom button:first-child { border-bottom: 1px solid #ccc; }
    .sign { width: 14px; height: 14px; stroke: #000; stroke-width: 2; fill: none; }
    .credit {
      position: absolute; right: 0; bottom: 0; height: 16px; padding: 0 5px;
      background: rgba(255, 255, 255, 0.7); color: #333; white-space: nowrap;
      font: 11px/16px "Liberation Sans", Arial, sans-serif;
    }
    .credit a { color: #0078a8; text-decoration: none; }
  `;

  private layer(kind: Kind) {
    return sectors
      .filter((s) => s[kind])
      .map((s) => svg`<path class=${kind} transform=${`translate(${s.x} ${s.y}) scale(0.33333)`} d=${s[kind]}></path>`);
  }

  private plane(x: number, y: number) {
    return svg`<path class="plane" transform=${`translate(${x} ${y})`}
      d="M0 -6.5Q1 -6 1 -4V-2L6 1.2V2.6L1 1.2V4L3 5.5V6.5L0 5.8L-3 6.5V5.5L-1 4V1.2L-6 2.6V1.2L-1 -2V-4Q-1 -6 0 -6.5Z"></path>`;
  }

  render() {
    return html`
      <svg class="canvas" viewBox="406 35 700 500">
        ${this.layer("built")}
        <path class="built" d=${specks(91, 70, 560, 60, 320, 320, 6)}></path>
        ${this.layer("wood")}
        ${this.layer("park")}
        <path class="park" d=${specks(55, 110, 570, 70, 350, 330, 4)}></path>
        <path class="edge" transform="translate(640 370) scale(0.33333)"
          d="M0 345L25 375L22 400L50 375L70 330L100 295L110 255L125 245L140 250L138 300L160 340L185 348L192 388L222 405L228 440L245 442L262 460L255 495M0 355L18 390L5 420L18 495"></path>
        <path class="streets" d=${streets}></path>
        ${this.layer("minor")}
        ${this.layer("water")}
        <path class="water" d=${specks(23, 75, 570, 50, 520, 470, 3.4)}></path>
        ${this.layer("river")}
        ${layers.map((k) => this.layer(k))}
        <path class="runway" d="M800 260.5L844 256.5M800 262.5L826 260"></path>
        <path class="peak" d="M647 342L651 349H643ZM939 218.5L943 225.5H935Z"></path>
        ${this.plane(717, 69.5)} ${this.plane(822, 255)}
        ${places.map(([x, y, t, c]) => svg`<text class=${c} x=${x} y=${y}>${t}</text>`)}
        ${shields.map(([x, y, w, c, lines]) => svg`
          <rect class=${`plate ${c}`} x=${x - w / 2} y=${y} width=${w} height=${5 + lines.length * 12} rx="1.5"></rect>
          ${lines.map((t, i) => svg`<text class=${`ref ${c}`} x=${x} y=${y + 12.5 + i * 12}>${t}</text>`)}`)}
        ${clusters.map(([x, y, n]) => svg`
          <circle class="halo" cx=${x} cy=${y} r="20"></circle>
          <circle class="disc" cx=${x} cy=${y} r="15"></circle>
          <text class="count" x=${x} y=${y + 4}>${n}</text>`)}
      </svg>
      <div class="zoom">
        <button aria-label="Zoom in"><svg class="sign" viewBox="0 0 14 14"><path d="M7 1V13M1 7H13"></path></svg></button>
        <button aria-label="Zoom out"><svg class="sign" viewBox="0 0 14 14"><path d="M1 7H13"></path></svg></button>
      </div>
      <div class="credit"><a>Leaflet</a> | © <a>OpenStreetMap</a></div>
    `;
  }
}

@customElement("app-root")
class AppRoot extends LitElement {
  static styles = css`
    :host {
      display: block; height: 590px; overflow: hidden; box-sizing: border-box; background: #fff;
      color: #333; font: 14px/20px "Roboto", sans-serif; padding-top: 4px;
    }
    .page { display: flex; border-top: 1px solid #aaa; }
    .side { width: 406px; }
    .map { padding-top: 30px; }
    h1 {
      box-sizing: border-box; margin: 0; padding: 20px 0 0 17px; height: 100px;
      font: 900 29.5px/40px "Inter", sans-serif; text-transform: uppercase;
      -webkit-text-stroke: 1.6px #333; display: flex; flex-direction: column;
    }
    .line { display: flex; height: 40px; gap: 9px; transform: scaleX(1.108); transform-origin: left; }
    .word { display: block; white-space: nowrap; letter-spacing: 1.7px; }
    .cap::first-letter { font-size: 33px; }
    .stats { display: flex; gap: 30px; padding: 18px 0 0 16px; }
    .stat { box-sizing: border-box; width: 100px; height: 89px; border: 5px solid; font-size: 18px; line-height: 17px; font-weight: 350; }
    .stat span { display: block; color: #333; height: 19px; }
    .stat hr { margin: 20px 0; border: 0; border-top: 1px solid #eee; }
    .green { border-color: green; }
    .violet { border-color: violet; }
    .red { border-color: red; }
    .facts { margin: 10px 0 0 1px; width: 390px; }
    .fact { display: grid; grid-template-columns: 244px 1fr; border-top: 1px solid #ddd; padding: 7px 0 9px 8px; }
    .name { font-weight: 500; letter-spacing: -0.07px; }
    .value { font-weight: 350; }
  `;

  private stats = [
    ["Non-Fatal", "4", "green"],
    ["Injury", "9", "violet"],
    ["Death", "2", "red"],
  ];

  private facts = [
    ["Year:", "2018"],
    ["Date:", "10/01/2018"],
    ["Time:", "10:00"],
    ["Day of Week:", "Monday"],
    ["Location", "Koramangala"],
    ["No. of vehicles involved:", "2"],
    ["Type of Collision:", "head-on"],
  ];

  render() {
    return html`
      <div class="page">
        <section class="side">
          <h1>
            <span class="line"><span class="word cap">Total</span><span class="word cap">No.</span><span class="word">of</span></span>
            <span class="line"><span class="word cap">Incidents:</span><span class="word">15</span></span>
          </h1>
          <div class="stats">
            ${this.stats.map(([k, v, c]) => html`<div class="stat ${c}"><span>${k}</span><hr /><span>${v}</span></div>`)}
          </div>
          <div class="facts">
            ${this.facts.map(([k, v]) => html`<div class="fact"><span class="name">${k}</span><span class="value">${v}</span></div>`)}
          </div>
        </section>
        <div class="map"><incident-map></incident-map></div>
      </div>
    `;
  }
}
